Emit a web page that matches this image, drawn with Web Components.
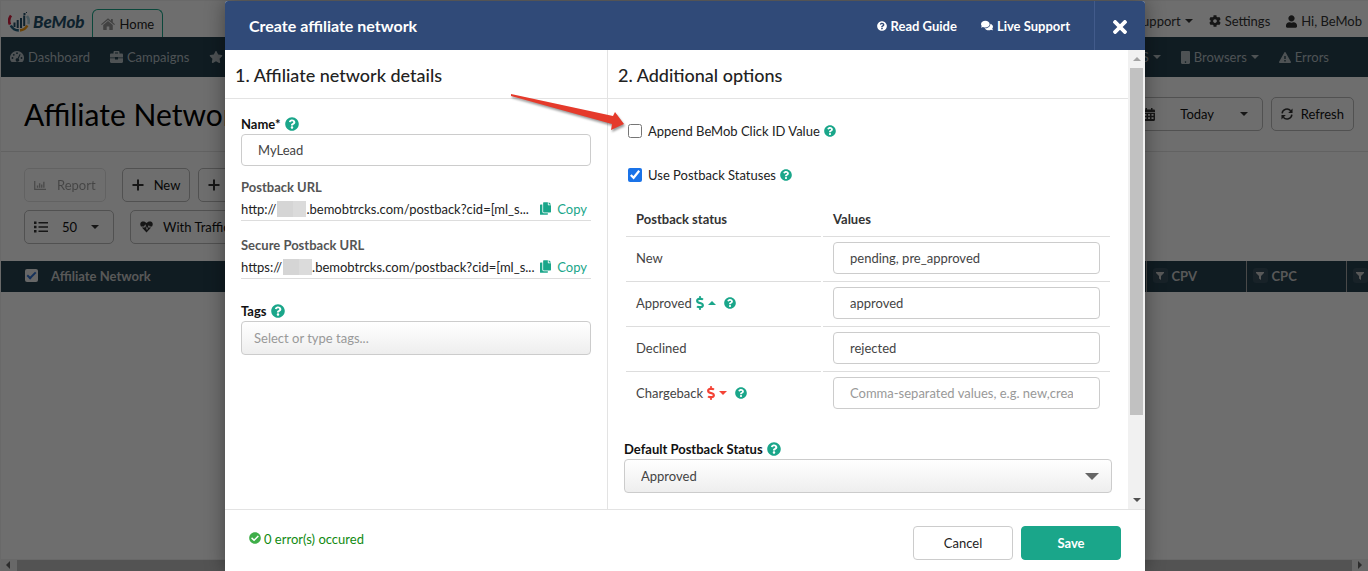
<!DOCTYPE html>
<html lang="en">
<head>
<meta charset="utf-8">
<title>BeMob - Affiliate Networks</title>
<style>
html, body { margin: 0; height: 100%; overflow: hidden; }
body { font: 13px/20px Lato, "Liberation Sans", sans-serif; color: #111; background: #fff; }
</style>
</head>
<body>
<bm-app></bm-app>
<script>
const ICONS = {
  question: ['0 0 512 512', '<path d="M504 256c0 136.997-111.043 248-248 248S8 392.997 8 256C8 119.083 119.043 8 256 8s248 111.083 248 248zM262.655 90c-54.497 0-89.255 22.957-116.549 63.758-3.536 5.286-2.353 12.415 2.715 16.258l34.699 26.31c5.205 3.947 12.621 3.008 16.665-2.122 17.864-22.658 30.113-35.797 57.303-35.797 20.429 0 45.698 13.148 45.698 32.958 0 14.976-12.363 22.667-32.534 33.976C247.128 238.528 216 254.941 216 296v4c0 6.627 5.373 12 12 12h56c6.627 0 12-5.373 12-12v-1.333c0-28.462 83.186-29.647 83.186-106.667 0-58.002-60.165-102-116.531-102zM256 338c-25.365 0-46 20.635-46 46 0 25.364 20.635 46 46 46s46-20.636 46-46c0-25.365-20.635-46-46-46z"/>'],
  check: ['0 0 512 512', '<path d="M504 256c0 136.967-111.033 248-248 248S8 392.967 8 256 119.033 8 256 8s248 111.033 248 248zM227.314 387.314l184-184c6.248-6.248 6.248-16.379 0-22.627l-22.627-22.627c-6.248-6.249-16.379-6.249-22.628 0L216 308.118l-70.059-70.059c-6.248-6.248-16.379-6.248-22.628 0l-22.627 22.627c-6.248 6.248-6.248 16.379 0 22.627l104 104c6.249 6.249 16.379 6.249 22.628.001z"/>'],
  times: ['0 80 352 352', '<path d="M242.72 256l100.07-100.07c12.28-12.28 12.28-32.19 0-44.48l-22.24-22.24c-12.28-12.28-32.19-12.28-44.48 0L176 189.28 75.93 89.21c-12.28-12.28-32.19-12.28-44.48 0L9.21 111.45c-12.28 12.28-12.28 32.19 0 44.48L109.28 256 9.21 356.07c-12.28 12.28-12.28 32.19 0 44.48l22.24 22.24c12.28 12.28 32.2 12.28 44.48 0L176 322.72l100.07 100.07c12.28 12.28 32.2 12.28 44.48 0l22.24-22.24c12.28-12.28 12.28-32.19 0-44.48L242.72 256z"/>'],
  comments: ['0 0 576 512', '<path d="M416 192c0-88.4-93.1-160-208-160S0 103.6 0 192c0 34.3 14.1 65.9 38 92-13.4 30.2-35.5 54.2-35.8 54.5-2.2 2.3-2.8 5.7-1.5 8.7S4.8 352 8 352c36.6 0 66.9-12.3 88.7-25 32.2 15.7 70.3 25 111.3 25 114.9 0 208-71.6 208-160zm122 220c23.9-26 38-57.7 38-92 0-66.9-53.5-124.2-129.3-148.1.9 6.6 1.3 13.3 1.3 20.1 0 105.9-107.7 192-240 192-10.8 0-21.3-.8-31.7-1.9C207.8 439.6 281.8 480 368 480c41 0 79.1-9.2 111.3-25 21.8 12.7 52.1 25 88.7 25 3.2 0 6.1-1.9 7.3-4.8 1.3-2.9.7-6.3-1.5-8.7-.3-.3-22.4-24.2-35.8-54.5z"/>'],
  copy: ['0 0 448 512', '<path d="M320 448v40c0 13.255-10.745 24-24 24H24c-13.255 0-24-10.745-24-24V120c0-13.255 10.745-24 24-24h72v296c0 30.879 25.121 56 56 56h168zm0-344V0H152c-13.255 0-24 10.745-24 24v368c0 13.255 10.745 24 24 24h272c13.255 0 24-10.745 24-24V128H344c-13.2 0-24-10.8-24-24zm120.971-31.029L375.029 7.029A24 24 0 0 0 358.059 0H352v96h96v-6.059a24 24 0 0 0-7.029-16.97z"/>'],
  user: ['0 0 448 512', '<path d="M224 256c70.7 0 128-57.3 128-128S294.7 0 224 0 96 57.3 96 128s57.3 128 128 128zm89.6 32h-16.7c-22.2 10.2-46.9 16-72.9 16s-50.6-5.8-72.9-16h-16.7C60.2 288 0 348.2 0 422.4V464c0 26.5 21.5 48 48 48h352c26.5 0 48-21.5 48-48v-41.6c0-74.2-60.2-134.4-134.4-134.4z"/>'],
  cog: ['0 0 512 512', '<path d="M487.4 315.7l-42.6-24.6c4.3-23.2 4.3-47 0-70.2l42.6-24.6c4.9-2.8 7.1-8.6 5.5-14-11.1-35.6-30-67.8-54.7-94.6-3.8-4.1-10-5.1-14.8-2.3L380.8 110c-17.9-15.4-38.5-27.3-60.8-35.1V25.8c0-5.6-3.9-10.5-9.4-11.7-36.7-8.2-74.3-7.8-109.2 0-5.5 1.2-9.4 6.1-9.4 11.7V75c-22.2 7.9-42.8 19.8-60.8 35.1L88.7 85.5c-4.9-2.8-11-1.9-14.8 2.3-24.7 26.7-43.6 58.9-54.7 94.6-1.7 5.4.6 11.2 5.5 14L67.3 221c-4.3 23.2-4.3 47 0 70.2l-42.6 24.6c-4.9 2.8-7.1 8.6-5.5 14 11.1 35.6 30 67.8 54.7 94.6 3.8 4.1 10 5.1 14.8 2.3l42.6-24.6c17.9 15.4 38.5 27.3 60.8 35.1v49.2c0 5.6 3.9 10.5 9.4 11.7 36.7 8.2 74.3 7.8 109.2 0 5.5-1.2 9.4-6.1 9.4-11.7v-49.2c22.2-7.9 42.8-19.8 60.8-35.1l42.6 24.6c4.9 2.8 11 1.9 14.8-2.3 24.7-26.7 43.6-58.9 54.7-94.6 1.5-5.5-.7-11.3-5.6-14.1zM256 336c-44.1 0-80-35.9-80-80s35.9-80 80-80 80 35.9 80 80-35.9 80-80 80z"/>'],
  star: ['0 0 576 512', '<path d="M259.3 17.8L194 150.2 47.9 171.5c-26.2 3.8-36.7 36.1-17.7 54.6l105.7 103-25 145.5c-4.5 26.3 23.2 46 46.4 33.7L288 439.6l130.7 68.7c23.2 12.2 50.9-7.4 46.4-33.7l-25-145.5 105.7-103c19-18.5 8.5-50.8-17.7-54.6L382 150.2 316.7 17.8c-11.7-23.6-45.6-23.9-57.4 0z"/>'],
  dollar: ['0 0 288 512', '<path d="M209.2 233.4l-108-31.6C88.7 198.2 80 186.5 80 173.5c0-16.3 13.2-29.5 29.5-29.5h66.3c12.2 0 24.2 3.7 34.2 10.5 6.1 4.1 14.3 3.1 19.5-2l34.8-34c7.1-6.9 6.1-18.4-1.8-24.5C238 74.8 207.4 64.1 176 64V16c0-8.8-7.2-16-16-16h-32c-8.8 0-16 7.2-16 16v48h-2.5C45.8 64-5.4 118.7.5 183.6c4.2 46.1 39.4 83.6 83.8 96.6l102.5 30c12.5 3.7 21.2 15.3 21.2 28.3 0 16.3-13.2 29.5-29.5 29.5h-66.3C100 368 88 364.3 78 357.5c-6.1-4.1-14.3-3.1-19.5 2l-34.8 34c-7.1 6.9-6.1 18.4 1.8 24.5 24.5 19.2 55.1 29.9 86.5 30v48c0 8.8 7.2 16 16 16h32c8.8 0 16-7.2 16-16v-48.2c46.6-.9 90.3-28.6 105.7-72.7 21.5-61.6-14.6-124.8-72.5-141.7z"/>'],
  home: ['0 0 14 12', '<path d="M7 0.3 0 6.2l.8.9L7 2l6.2 5.1.8-.9-2.2-1.9V1H10v1.8zM7 3.1 2.2 7v4.6c0 .2.2.4.4.4h3.1V8.4h2.6V12h3.1c.2 0 .4-.2.4-.4V7z"/>'],
  gauge: ['0 0 14 12', '<path fill-rule="evenodd" d="M7 0a7 7 0 0 0-6 10.6c.2.3.5.4.9.4h10.200c.4 0 .7-.1.9-.4A7 7 0 0 0 7 0zM7 1.300a.9.9 0 1 1 0 1.800.9.9 0 0 1 0-1.800zM2.500 6.100a.9.9 0 1 1 0 1.800.9.9 0 0 1 0-1.800zM3.800 2.900a.9.9 0 1 1 0 1.800.9.9 0 0 1 0-1.800zM11.500 6.100a.9.9 0 1 1 0 1.800.9.9 0 0 1 0-1.800zM9.700 3l.9.5-2 4.300a1.700 1.700 0 1 1-1-.5z"/>'],
  briefcase: ['0 0 13 12', '<path fill-rule="evenodd" d="M3.500 2.500V1.200C3.500.5 4 0 4.700 0h3.600c.7 0 1.200.5 1.200 1.200v1.300h2.300c.7 0 1.200.5 1.200 1.200V6.500H8V6H5v.5H0V3.700c0-.7.5-1.200 1.200-1.200zM5 2.500h3v-1H5zM0 7.300h5v1.200h3V7.300h5v3.500c0 .7-.5 1.200-1.200 1.200H1.200C.5 12 0 11.500 0 10.800z"/>'],
  mobile: ['0 0 9 13', '<path fill-rule="evenodd" d="M1.200 0h6.600C8.500 0 9 .5 9 1.200v10.600c0 .7-.5 1.200-1.200 1.200H1.200C.5 13 0 12.500 0 11.800V1.200C0 .5.500 0 1.200 0zM4.500 10.300a.8.8 0 1 0 0 1.600.8.8 0 0 0 0-1.600z"/>'],
  warning: ['0 0 12 11', '<path fill-rule="evenodd" d="M5.300.4a.8.800 0 0 1 1.400 0l5.200 9.400a.8.800 0 0 1-.7 1.200H.8a.8.800 0 0 1-.7-1.200zM5.300 4v3h1.400V4zM5.300 8v1.400h1.400V8z"/>'],
  chart: ['0 0 14 12', '<path d="M0 1h1.400v8.600H13V11H0zM3 6h1.500v2.500H3zM5.300 3.500h1.500v5H5.300zM7.600 5h1.500v3.500H7.600zM9.900 2h1.500v6.500H9.900z"/>'],
  plus: ['0 0 12 12', '<path d="M5 .5h2V5h4.500v2H7v4.500H5V7H.5V5H5z"/>'],
  list: ['0 0 14 12', '<path d="M0 .5h2.500V3H0zM4.500 1H14v1.500H4.500zM0 4.800h2.500v2.400H0zM4.500 5.200H14v1.500H4.500zM0 9h2.500v2.500H0zM4.500 9.500H14V11H4.500z"/>'],
  heart: ['0 0 14 13', '<path d="M1 6C-.5 3.500.4 1.200 2.200.6 4 .1 5.800.6 7 2.200 8.200.6 10 .1 11.800.6c1.800.6 2.700 2.900 1.200 5.400h-2.600L9.600 4.200l-2 4.300-2-5L4.400 6z"/><path d="M2 7h3l.7-1.600 1.800 4.700 2-4 .4.9H12L7 12.500z"/>'],
  calendar: ['0 0 12 13', '<path fill-rule="evenodd" d="M2.500 0H4v1.500h4V0h1.500v1.500h1.300c.7 0 1.200.5 1.200 1.200V4H0V2.700c0-.7.5-1.200 1.200-1.200h1.300zM0 4.800h12v7c0 .7-.5 1.200-1.200 1.200H1.200C.5 13 0 12.500 0 11.800zM1.500 6v1.700h2V6zm3.500 0v1.700h2V6zm3.500 0v1.700h2V6zm-7 3.200v1.700h2V9.200zm3.500 0v1.700h2V9.200zm3.500 0v1.700h2V9.200z"/>'],
  sync: ['0 0 13 13', '<path d="M1.200 5.800A5.300 5.300 0 0 1 10.500 3M11.800 7.200A5.300 5.300 0 0 1 2.500 10" fill="none" stroke="currentColor" stroke-width="1.600"/><path d="M12.500.600v4.700H7.800zM.5 12.400V7.700h4.700z"/>'],
  filter: ['0 0 8 8', '<path d="M0 0h8v1L5 4v4L3 6.500V4L0 1z"/>'],
  caret: ['0 0 8 4', '<path d="M0 0h8L4 4z"/>'],
  up: ['0 0 8 4', '<path d="M0 4h8L4 0z"/>'],
  left: ['0 0 4 8', '<path d="M4 0v8L0 4z"/>'],
  logo: ['0 0 22 20', '<g fill="none" stroke-width="2.600"><path d="M3 3.500A8.700 8.700 0 0 0 2 12.500" stroke="#d8203f"/><path d="M2.800 13.500A9 9 0 0 0 10.800 18.400" stroke="#24617f"/><path d="M12 18.400A9 9 0 0 0 19.300 13.500" stroke="#f39c12"/><path d="M20.300 12A9 9 0 0 0 19 4" stroke="#a8cbd8"/></g><g fill="#24506a"><path d="M5.500 10.500h2V15h-2zM8.700 8h2v8h-2zM12 6h2v10h-2zM15.200 3.500h2V14h-2z"/><path d="M15.500 1h2v2h-2zM18 0h1v1h-1z"/></g>']
};

function define(name, html) {
  const template = document.createElement('template');
  template.innerHTML = html;
  customElements.define(name, class extends HTMLElement {
    constructor() {
      super();
      this.attachShadow({ mode: 'open' }).append(template.content.cloneNode(true));
    }
  });
}

/* <bm-icon name size>: size is the drawn width, the height follows the viewBox */
class BmIcon extends HTMLElement {
  connectedCallback() {
    if (this.shadowRoot) return;
    const [box, body] = ICONS[this.getAttribute('name')];
    const [, , w, h] = box.split(' ').map(Number);
    const size = Number(this.getAttribute('size') || 12);
    this.attachShadow({ mode: 'open' }).innerHTML =
      `<style>:host{display:inline-flex;flex:none}svg{display:block;fill:currentColor}</style>
       <svg aria-hidden="true" viewBox="${box}" width="${size}" height="${Math.round(size * h / w)}">${body}</svg>`;
  }
}
customElements.define('bm-icon', BmIcon);

class BmHelp extends HTMLElement {
  connectedCallback() {
    if (this.shadowRoot) return;
    this.attachShadow({ mode: 'open' }).innerHTML =
      `<style>:host{display:inline-flex;flex:none}button{display:flex;border:0;padding:0;background:none;color:#1aa68a}</style>
       <button type="button" aria-label="Help"><bm-icon name="question" size="${this.getAttribute('size') || 14}"></bm-icon></button>`;
  }
}
customElements.define('bm-help', BmHelp);

define('bm-topbar', `
<style>
  :host { display: flex; align-items: center; height: 36px; color: #333; }
  a { color: inherit; text-decoration: none; display: flex; align-items: center; gap: 4px; }
  .brand { gap: 3px; margin: 6px 7px 0 7px; font: italic 900 17px/20px Lato, sans-serif; color: #24506a; }
  .tab { align-self: flex-end; box-sizing: border-box; height: 28px; padding: 1px 8px 0; gap: 5px; border: 1px solid #1aa68a; border-bottom: 0; border-radius: 6px 6px 0 0; color: #222; }
  .tab bm-icon { color: #999; }
  nav { margin-left: auto; display: flex; gap: 16px; padding: 4px 6px 0 0; }
</style>
<a class="brand" href="#"><bm-icon name="logo" size="22"></bm-icon>BeMob</a>
<a class="tab" href="#"><bm-icon name="home" size="14"></bm-icon>Home</a>
<nav>
  <a href="#">Support <bm-icon name="caret" size="8"></bm-icon></a>
  <a href="#"><bm-icon name="cog" size="12"></bm-icon>Settings</a>
  <a href="#"><bm-icon name="user" size="11"></bm-icon>Hi, BeMob</a>
</nav>`);

define('bm-navbar', `
<style>
  :host { display: flex; align-items: center; height: 40px; gap: 20px; padding: 0 39px 0 9px; background: #25414f; color: #b4bfc4; }
  a { color: inherit; text-decoration: none; display: flex; align-items: center; gap: 4px; }
  .end { margin-left: auto; }
</style>
<a href="#"><bm-icon name="gauge" size="14"></bm-icon>Dashboard</a>
<a href="#"><bm-icon name="briefcase" size="13"></bm-icon>Campaigns</a>
<a href="#"><bm-icon name="star" size="14"></bm-icon>Offers</a>
<a href="#" class="end">OS <bm-icon name="caret" size="8"></bm-icon></a>
<a href="#"><bm-icon name="mobile" size="9"></bm-icon>Browsers <bm-icon name="caret" size="8"></bm-icon></a>
<a href="#"><bm-icon name="warning" size="12"></bm-icon>Errors</a>`);

define('bm-button', `
<style>
  :host { display: block; }
  :host([muted]) { opacity: .4; }
  button { display: flex; align-items: center; gap: var(--gap, 10px); width: 100%; height: 34px; padding: 0 9px; border: 1px solid #bbb; border-radius: 5px; background: none; font: inherit; color: #111; white-space: nowrap; }
</style>
<button type="button"><slot></slot></button>`);

define('bm-pagehead', `
<style>
  :host { display: flex; align-items: center; height: 74px; padding: 0 14px 0 23px; border-bottom: 1px solid #e3e3e3; }
  h1 { margin: 0 auto 0 0; font: 400 30px/40px Lato, sans-serif; color: #000; }
  bm-button { --gap: 8px; margin-left: 8px; }
  .range { width: 130px; }
  .range span { flex: 1; text-align: center; }
  .range bm-icon:last-child { margin-right: 5px; }
  bm-icon { color: #333; }
</style>
<h1>Affiliate Networks</h1>
<bm-button class="range"><bm-icon name="calendar" size="12"></bm-icon><span>Today</span><bm-icon name="caret" size="8"></bm-icon></bm-button>
<bm-button><bm-icon name="sync" size="12"></bm-icon>Refresh</bm-button>`);

define('bm-toolbar', `
<style>
  :host { display: grid; gap: 8px; padding: 16px 23px 17px; }
  div { display: flex; gap: 16px; }
  .pair { gap: 8px; }
  .count { width: 90px; }
  .count span { margin: 0 4px; }
  bm-icon { color: #333; }
</style>
<div>
  <bm-button muted><bm-icon name="chart" size="13"></bm-icon>Report</bm-button>
  <div class="pair">
    <bm-button><bm-icon name="plus" size="12"></bm-icon>New</bm-button>
    <bm-button><bm-icon name="plus" size="12"></bm-icon></bm-button>
  </div>
</div>
<div>
  <bm-button class="count"><bm-icon name="list" size="14"></bm-icon><span>50</span><bm-icon name="caret" size="8"></bm-icon></bm-button>
  <bm-button><bm-icon name="heart" size="13"></bm-icon>With Traffic</bm-button>
</div>`);

define('bm-grid', `
<style>
  :host { display: block; overflow: hidden; }
  table { width: calc(100% + 78px); border-collapse: collapse; table-layout: fixed; background: #25414f; color: #ccc; }
  th { height: 29px; padding: 0 0 2px 6px; border-left: 1px solid #a9a9a9; text-align: left; font-weight: 700; }
  th:first-child { border: 0; padding-left: 23px; }
  col.metric { width: 100px; }
  .cell { display: flex; align-items: center; gap: 4px; }
  input { appearance: none; display: grid; place-items: center; width: 13px; height: 13px; margin: 0 9px 0 1px; border-radius: 2px; background: #eee; }
  input:checked::before { content: ""; box-sizing: border-box; width: 9px; height: 5px; margin-bottom: 3px; border: solid #2f6fd0; border-width: 0 0 2px 2px; transform: rotate(-45deg); }
  i { display: flex; align-items: center; justify-content: center; width: 15px; height: 15px; border-radius: 3px; background: #38505e; }
</style>
<table>
  <colgroup><col><col class="metric"><col class="metric"><col class="metric"></colgroup>
  <tr>
    <th><div class="cell"><input type="checkbox" checked id="all"><label for="all">Affiliate Network</label></div></th>
    <th><div class="cell"><i><bm-icon name="filter" size="8"></bm-icon></i>CPV</div></th>
    <th><div class="cell"><i><bm-icon name="filter" size="8"></bm-icon></i>CPC</div></th>
    <th><div class="cell"><i><bm-icon name="filter" size="8"></bm-icon></i></div></th>
  </tr>
</table>`);

define('bm-hscroll', `
<style>
  :host { display: flex; align-items: center; margin-top: auto; height: 12px; background: #f1f1f1; color: #666; padding-left: 5px; }
  div { flex: 1; height: 11px; margin-left: 7px; background: #c1c1c1; }
  bm-icon:last-child { transform: scaleX(-1); margin: 0 6px; }
</style>
<bm-icon name="left" size="4"></bm-icon><div></div><bm-icon name="left" size="4"></bm-icon>`);

define('bm-vscroll', `
<style>
  :host { display: flex; flex-direction: column; align-items: center; width: 17px; flex: none; box-sizing: border-box; padding: 7px 0; background: #f1f1f1; color: #505050; }
  .up { color: #a3a3a3; }
  div { flex: none; width: 13px; height: 78%; margin: 7px 0 auto; background: #c1c1c1; }
</style>
<bm-icon class="up" name="up" size="8"></bm-icon><div></div><bm-icon name="caret" size="8"></bm-icon>`);

define('bm-dialog', `
<style>
  :host { display: flex; flex-direction: column; box-sizing: border-box; width: 920px; max-width: 100%; height: 100%; background: #fff; border-radius: 3px 3px 0 0; box-shadow: 0 0 20px rgba(0,0,0,.4); overflow: hidden; }
  header { display: flex; align-items: center; height: 49px; flex: none; background: #304a78; color: #fff; }
  h2 { margin: 0 auto 0 24px; font: 700 16px/20px Lato, sans-serif; }
  a { color: inherit; text-decoration: none; display: flex; align-items: center; gap: 4px; margin-right: 24px; font-weight: 700; }
  .close { align-self: stretch; display: flex; align-items: center; justify-content: center; width: 51px; padding: 3px 0 0; border: 0; border-left: 1px solid #425b8b; background: none; color: #fff; }
  main { flex: 1; min-height: 0; display: flex; overflow: hidden; }
  footer { flex: none; display: flex; align-items: center; gap: 8px; height: 61px; padding: 0 24px; border-top: 1px solid #e3e3e3; }
  output { margin-right: auto; display: flex; align-items: center; gap: 3px; padding-bottom: 3px; color: #118a11; }
  output bm-icon { color: #3fae49; padding-bottom: 3px; }
  footer button { width: 100px; height: 34px; margin-top: 5px; border: 1px solid #ccc; border-radius: 4px; background: #fff; font: inherit; color: #222; }
  footer .save { background: #1aa68a; border-color: #1aa68a; color: #fff; font-weight: 700; }
</style>
<header>
  <h2>Create affiliate network</h2>
  <a href="#"><bm-icon name="question" size="10"></bm-icon>Read Guide</a>
  <a href="#"><bm-icon name="comments" size="12"></bm-icon>Live Support</a>
  <button class="close" type="button" aria-label="Close"><bm-icon name="times" size="14"></bm-icon></button>
</header>
<main><slot></slot></main>
<footer>
  <output><bm-icon name="check" size="12"></bm-icon>0 error(s) occured</output>
  <button type="button">Cancel</button>
  <button type="button" class="save">Save</button>
</footer>`);

define('bm-panel', `
<style>
  :host { display: block; box-sizing: border-box; }
  h3 { margin: 0; padding: 13px 10px 15px; height: 20px; border-bottom: 1px solid #e3e3e3; font: 500 18px/24px Lato, sans-serif; color: #222; }
</style>
<h3><slot name="title"></slot></h3>
<slot></slot>`);

define('bm-url', `
<style>
  :host { display: block; margin-bottom: 14px; }
  .name { line-height: 20px; color: #555; font-weight: 700; }
  .row { display: flex; align-items: center; height: 23px; border-bottom: 1px solid #ddd; color: #222; }
  .link { flex: 1; min-width: 0; white-space: nowrap; }
  button { display: flex; gap: 6px; align-items: center; border: 0; padding: 0 4px 0 0; background: none; color: #1aa68a; font: inherit; }
</style>
<div class="name"><slot name="name"></slot></div>
<div class="row"><span class="link"><slot></slot></span><button type="button"><bm-icon name="copy" size="11"></bm-icon>Copy</button></div>`);

define('bm-details', `
<style>
  :host { display: block; flex: 382 0 0; min-width: 0; border-right: 1px solid #e3e3e3; }
  .body { padding: 15px 16px; }
  .label { display: flex; align-items: center; gap: 4px; height: 20px; font-weight: 700; color: #111; }
  input { display: block; box-sizing: border-box; width: 100%; height: 32px; padding: 0 16px; border: 1px solid #ccc; border-radius: 4px; font: inherit; color: #444; }
  .tags { height: 34px; padding: 0 12px; background: linear-gradient(#fff, #eee); }
  input::placeholder { color: #999; }
  .name { margin-bottom: 11px; }
  .last { margin-top: 22px; }
  .mask { display: inline-block; width: 29px; height: 16px; vertical-align: top; margin: 2px 0 0 1px; background: linear-gradient(90deg, #d5d5d5 55%, #dbdbdb 55%); }
</style>
<bm-panel>
  <span slot="title">1. Affiliate network details</span>
  <div class="body">
    <div class="label"><label for="name">Name*</label><bm-help></bm-help></div>
    <input id="name" class="name" value="MyLead">
    <bm-url><span slot="name">Postback URL</span>http://<span class="mask"></span>.bemobtrcks.com/postback?cid=[ml_s...</bm-url>
    <bm-url><span slot="name">Secure Postback URL</span>https://<span class="mask"></span>.bemobtrcks.com/postback?cid=[ml_s...</bm-url>
    <div class="label last"><label for="tags">Tags</label><bm-help></bm-help></div>
    <input id="tags" class="tags" placeholder="Select or type tags...">
  </div>
</bm-panel>`);

define('bm-options', `
<style>
  :host { display: block; flex: 520 0 0; min-width: 0; }
  .body { padding: 22px 16px 0; }
  .check { display: flex; align-items: center; height: 20px; margin-bottom: 24px; padding-left: 4px; color: #222; }
  .check label { margin: 0 4px 0 6px; }
  .check input { margin: 0; width: 14px; height: 14px; accent-color: #1a73e8; }
  table { width: 100%; margin-top: -10px; border-spacing: 2px; table-layout: fixed; color: #444; }
  col:first-child { width: 195px; }
  th, td { box-sizing: border-box; height: 43px; padding: 0 10px 4px; text-align: left; border-bottom: 1px solid #ddd; }
  th { height: 36px; padding-bottom: 0; color: #333; font-weight: 700; }
  tr:last-child td { border-bottom-color: transparent; }
  .status { display: flex; align-items: center; gap: 4px; }
  .status bm-help { margin-left: 4px; }
  .gain { color: #1aa68a; }
  .loss { color: #f44336; }
  td input { display: block; box-sizing: border-box; width: 100%; height: 32px; padding: 0 26px 0 16px; border: 1px solid #ccc; border-radius: 4px; font: inherit; color: #444; }
  td input::placeholder { color: #999; }
  .label { display: flex; align-items: center; gap: 4px; height: 20px; margin-top: 20px; font-weight: 700; color: #111; }
  .pick { display: grid; align-items: center; }
  .pick > * { grid-area: 1 / 1; }
  .pick bm-icon { justify-self: end; margin-right: 13px; color: #666; pointer-events: none; }
  select { appearance: none; width: 100%; height: 34px; padding: 0 16px; border: 1px solid #ccc; border-radius: 4px; background: linear-gradient(#fff, #eee); font: inherit; color: #444; }
</style>
<bm-panel>
  <span slot="title">2. Additional options</span>
  <div class="body">
    <div class="check"><input type="checkbox" id="append"><label for="append">Append BeMob Click ID Value</label><bm-help size="12"></bm-help></div>
    <div class="check"><input type="checkbox" id="use" checked><label for="use">Use Postback Statuses</label><bm-help size="12"></bm-help></div>
    <table>
      <colgroup><col><col></colgroup>
      <thead><tr><th>Postback status</th><th>Values</th></tr></thead>
      <tbody>
        <tr><td><label for="new">New</label></td><td><input id="new" value="pending, pre_approved"></td></tr>
        <tr><td><div class="status"><label for="approved">Approved</label><bm-icon class="gain" name="dollar" size="8"></bm-icon><bm-icon class="gain" name="up" size="8"></bm-icon><bm-help size="12"></bm-help></div></td><td><input id="approved" value="approved"></td></tr>
        <tr><td><label for="declined">Declined</label></td><td><input id="declined" value="rejected"></td></tr>
        <tr><td><div class="status"><label for="chargeback">Chargeback</label><bm-icon class="loss" name="dollar" size="8"></bm-icon><bm-icon class="loss" name="caret" size="8"></bm-icon><bm-help size="12"></bm-help></div></td><td><input id="chargeback" placeholder="Comma-separated values, e.g. new,created"></td></tr>
      </tbody>
    </table>
    <div class="label"><label for="default">Default Postback Status</label><bm-help></bm-help></div>
    <div class="pick"><select id="default"><option>Approved</option><option>New</option><option>Declined</option></select><bm-icon name="caret" size="14"></bm-icon></div>
  </div>
</bm-panel>`);

define('bm-app', `
<style>
  :host { display: grid; height: 100vh; box-sizing: border-box; grid-template: minmax(0, 1fr) / minmax(0, 1fr); border: solid #696969; border-width: 1px 0 0 1px; position: relative; }
  .page, .overlay { grid-area: 1 / 1; min-height: 0; }
  .page { display: flex; flex-direction: column; overflow: hidden; }
  .overlay { display: flex; justify-content: center; padding-left: 1px; z-index: 1; background: rgba(0, 0, 0, .57); }
  .pointer { position: absolute; z-index: 2; left: calc(50% - 175px); top: 90px; overflow: visible; filter: drop-shadow(1px 2px 1px rgba(0,0,0,.4)); pointer-events: none; }
</style>
<div class="page">
  <bm-topbar></bm-topbar>
  <bm-navbar></bm-navbar>
  <bm-pagehead></bm-pagehead>
  <bm-toolbar></bm-toolbar>
  <bm-grid></bm-grid>
  <bm-hscroll></bm-hscroll>
</div>
<div class="overlay">
  <bm-dialog>
    <bm-details></bm-details>
    <bm-options></bm-options>
    <bm-vscroll></bm-vscroll>
  </bm-dialog>
</div>
<svg class="pointer" width="116" height="42" viewBox="0 0 116 42" aria-hidden="true"><path fill="#e53a2b" d="M1 3 103 25l2-4 9 12-13 6 1-6L1 5z"/></svg>`);
</script>
</body>
</html>
